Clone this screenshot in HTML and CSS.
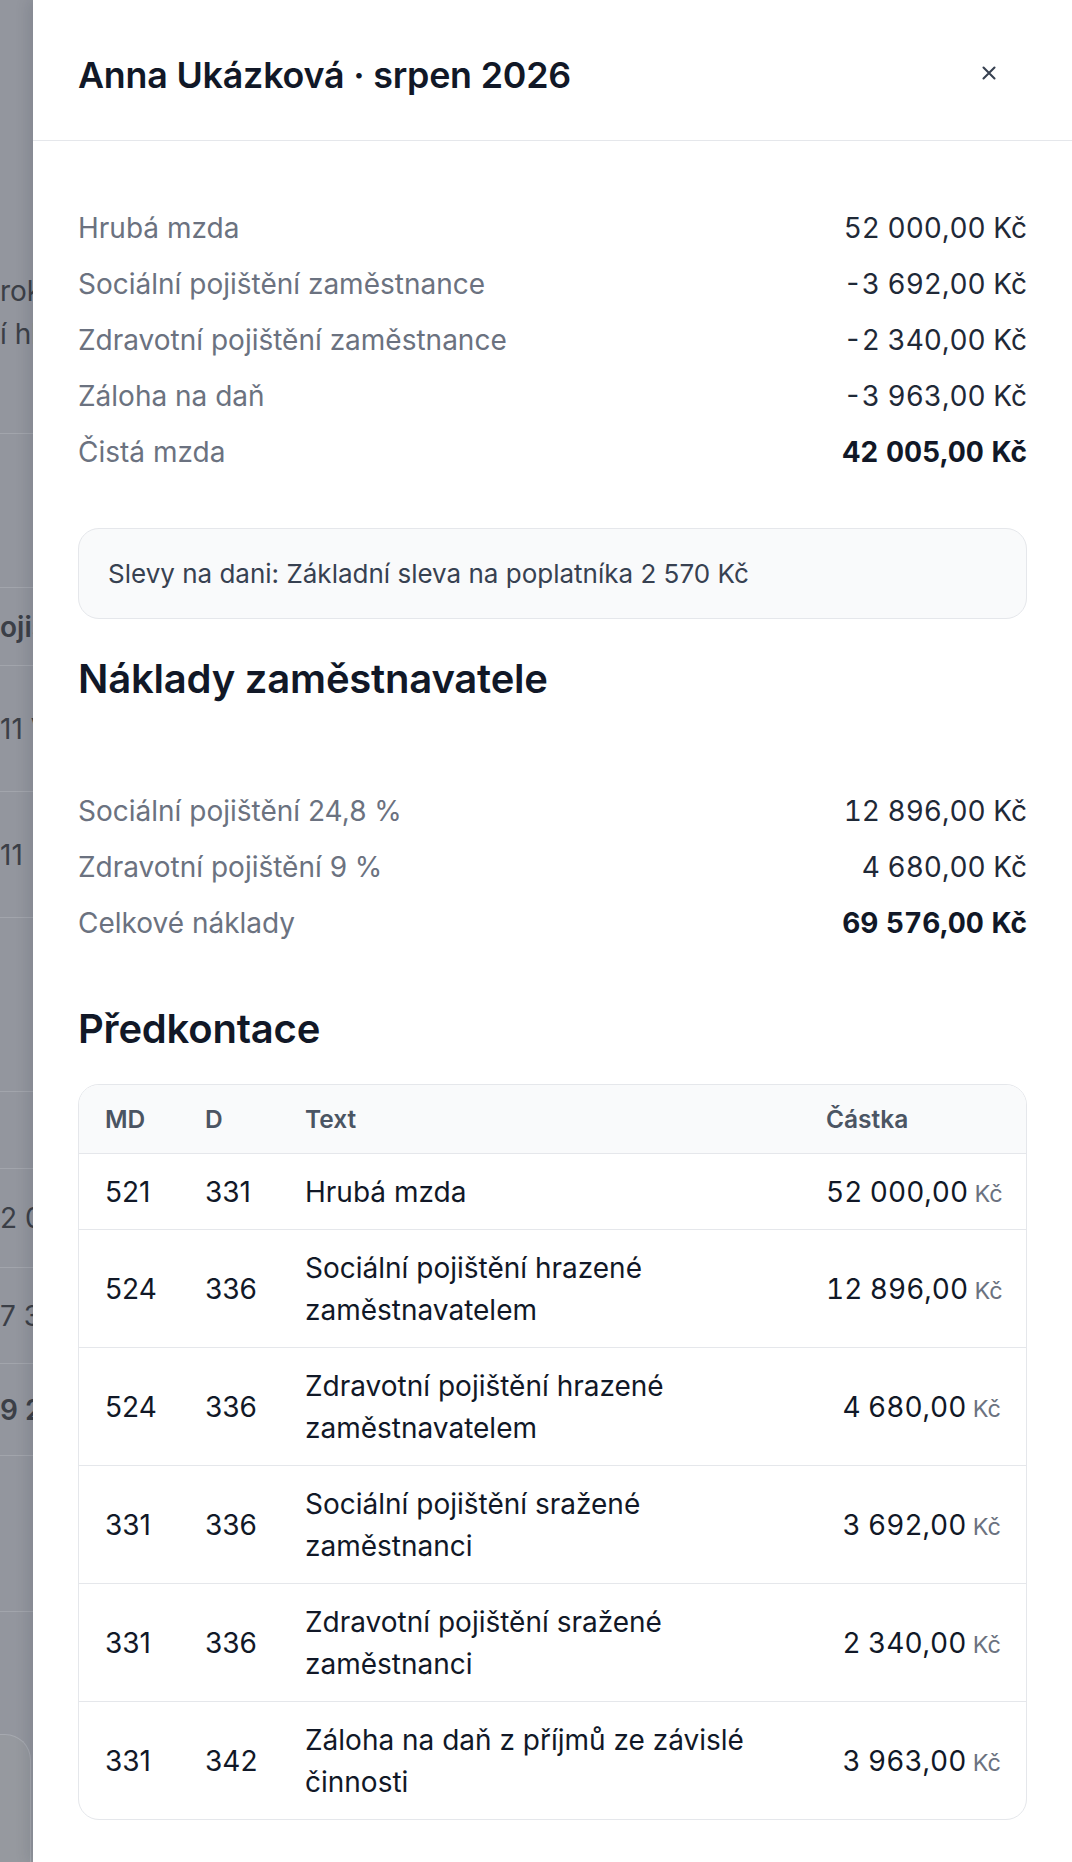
FILE: index.html
```html
<!DOCTYPE html>
<html lang="cs">
<head>
<meta charset="utf-8">
<title>Anna Ukázková · srpen 2026</title>
<link rel="stylesheet" href="styles.css">
</head>
<body>
<div class="screen">
  <div class="backdrop" aria-hidden="true">
    <div class="bd-block bd-top">
      <div class="bd-line">rokem</div>
      <div class="bd-line">í hlavní</div>
    </div>
    <div class="bd-block bd-h153"></div>
    <div class="bd-block bd-h77"><span class="bd-bold">ojištění</span></div>
    <div class="bd-block bd-h125">11 Výplata</div>
    <div class="bd-block bd-h125">11</div>
    <div class="bd-block bd-h173"></div>
    <div class="bd-block bd-h76"></div>
    <div class="bd-block bd-h98">2 000</div>
    <div class="bd-block bd-h95">7 320</div>
    <div class="bd-block bd-h91"><span class="bd-bold">9 210</span></div>
    <div class="bd-block bd-h155"></div>
    <div class="bd-block bd-h123"></div>
    <div class="bd-card"></div>
  </div>

  <aside class="drawer">
    <header class="drawer-head">
      <h2 class="drawer-title">Anna Ukázková · srpen 2026</h2>
      <button class="close-btn" type="button" aria-label="Zavřít">
        <svg width="16" height="16" viewBox="0 0 16 16"><path d="M2.5 2.5 L13.5 13.5 M13.5 2.5 L2.5 13.5" stroke="#374151" stroke-width="2.1" stroke-linecap="round" fill="none"/></svg>
      </button>
    </header>

    <div class="drawer-body">
      <dl class="summary">
        <div class="sum-row"><dt>Hrubá mzda</dt><dd>52 000,00 Kč</dd></div>
        <div class="sum-row"><dt>Sociální pojištění zaměstnance</dt><dd>-3 692,00 Kč</dd></div>
        <div class="sum-row"><dt>Zdravotní pojištění zaměstnance</dt><dd>-2 340,00 Kč</dd></div>
        <div class="sum-row"><dt>Záloha na daň</dt><dd>-3 963,00 Kč</dd></div>
        <div class="sum-row"><dt>Čistá mzda</dt><dd class="strong">42 005,00 Kč</dd></div>
      </dl>

      <div class="note">Slevy na dani: Základní sleva na poplatníka 2 570 Kč</div>

      <h3 class="section-title first">Náklady zaměstnavatele</h3>
      <dl class="summary costs">
        <div class="sum-row"><dt>Sociální pojištění 24,8 %</dt><dd>12 896,00 Kč</dd></div>
        <div class="sum-row"><dt>Zdravotní pojištění 9 %</dt><dd>4 680,00 Kč</dd></div>
        <div class="sum-row"><dt>Celkové náklady</dt><dd class="strong">69 576,00 Kč</dd></div>
      </dl>

      <h3 class="section-title second">Předkontace</h3>
      <table class="ledger">
        <colgroup>
          <col class="c-md"><col class="c-d"><col class="c-text"><col class="c-amt">
        </colgroup>
        <thead>
          <tr><th>MD</th><th>D</th><th>Text</th><th>Částka</th></tr>
        </thead>
        <tbody>
          <tr><td>521</td><td>331</td><td>Hrubá mzda</td><td class="amt">52 000,00<span class="cur"> Kč</span></td></tr>
          <tr><td>524</td><td>336</td><td>Sociální pojištění hrazené zaměstnavatelem</td><td class="amt">12 896,00<span class="cur"> Kč</span></td></tr>
          <tr><td>524</td><td>336</td><td>Zdravotní pojištění hrazené zaměstnavatelem</td><td class="amt">4 680,00<span class="cur"> Kč</span></td></tr>
          <tr><td>331</td><td>336</td><td>Sociální pojištění sražené zaměstnanci</td><td class="amt">3 692,00<span class="cur"> Kč</span></td></tr>
          <tr><td>331</td><td>336</td><td>Zdravotní pojištění sražené zaměstnanci</td><td class="amt">2 340,00<span class="cur"> Kč</span></td></tr>
          <tr><td>331</td><td>342</td><td>Záloha na daň z příjmů ze závislé činnosti</td><td class="amt">3 963,00<span class="cur"> Kč</span></td></tr>
        </tbody>
      </table>
    </div>
  </aside>
</div>
</body>
</html>
```

FILE: styles.css
```css
* { box-sizing: border-box; }

html, body {
  margin: 0;
  padding: 0;
  background: #ffffff;
}

body {
  font-family: Inter, "Noto Sans", "Liberation Sans", sans-serif;
  color: #111827;
}

.screen {
  display: flex;
  width: 1072px;
  height: 1862px;
  overflow: hidden;
}

/* dimmed page behind the drawer */
.backdrop {
  flex: 0 0 33px;
  background: #93969e;
  color: #3b3f47;
  font-size: 28px;
  line-height: 42px;
  overflow: hidden;
  white-space: nowrap;
}

.bd-block {
  display: flex;
  align-items: center;
  border-bottom: 1px solid #a2a5ac;
  overflow: hidden;
}

.bd-top {
  height: 434px;
  flex-direction: column;
  align-items: flex-start;
  justify-content: flex-start;
  padding-top: 270px;
}

.bd-line { line-height: 43px; }

.bd-h153 { height: 154px; }
.bd-h77 { height: 78px; }
.bd-h125 { height: 126px; }
.bd-h173 { height: 174px; }
.bd-h76 { height: 77px; }
.bd-h98 { height: 99px; }
.bd-h95 { height: 96px; }
.bd-h91 { height: 92px; }
.bd-h155 { height: 156px; }
.bd-h123 { height: 122px; border-bottom: 0; }

.bd-bold { font-weight: 600; }

.bd-card {
  height: 200px;
  margin-right: 2px;
  border-top: 1px solid #a6a9b0;
  border-right: 1px solid #a6a9b0;
  border-top-right-radius: 26px;
  background: #96999f;
}

/* drawer */
.drawer {
  flex: 1 1 auto;
  background: #ffffff;
  box-shadow: -4px 0 14px rgba(17, 24, 39, 0.12);
  display: flex;
  flex-direction: column;
}

.drawer-head {
  display: flex;
  align-items: center;
  justify-content: space-between;
  height: 141px;
  padding: 51px 64px 40px 45px;
  border-bottom: 1px solid #e5e7eb;
}

.drawer-title {
  margin: 0;
  font-size: 35.8px;
  line-height: 49px;
  font-weight: 600;
  color: #111827;
  letter-spacing: -0.2px;
}

.close-btn {
  width: 38px;
  height: 38px;
  margin-top: -5px;
  padding: 0;
  border: 0;
  background: transparent;
  display: flex;
  align-items: center;
  justify-content: center;
}

.drawer-body {
  padding: 66px 45px 0 45px;
}

.summary {
  margin: 0;
  display: flex;
  flex-direction: column;
  gap: 14px;
}

.sum-row {
  display: flex;
  justify-content: space-between;
  align-items: center;
  font-size: 28px;
  line-height: 42px;
}

.sum-row dt {
  color: #6b7280;
}

.sum-row dd {
  margin: 0;
  color: #1f2937;
  font-variant-numeric: tabular-nums;
}

.sum-row dd.strong {
  font-weight: 700;
  color: #111827;
}

.note {
  margin-top: 55px;
  padding: 27px 29px;
  background: #f9fafb;
  border: 1px solid #e5e7eb;
  border-radius: 21px;
  font-size: 26px;
  line-height: 35px;
  color: #374151;
}

.section-title {
  margin: 0;
  font-size: 40px;
  line-height: 49px;
  font-weight: 600;
  color: #111827;
  letter-spacing: -0.2px;
}

.section-title.first {
  margin-top: 34.5px;
  margin-bottom: 87.5px;
}

.section-title.second {
  margin-top: 59.5px;
  margin-bottom: 31.5px;
}

.ledger {
  width: 100%;
  table-layout: fixed;
  border-collapse: separate;
  border-spacing: 0;
  border: 1px solid #e5e7eb;
  border-radius: 21px;
  overflow: hidden;
}

.c-md { width: 113px; }
.c-d { width: 100px; }
.c-amt { width: 213px; }

.ledger th,
.ledger td {
  padding: 16.5px 13px;
  text-align: left;
  vertical-align: middle;
  border-bottom: 1px solid #e5e7eb;
}

.ledger th:first-child,
.ledger td:first-child {
  padding-left: 26px;
}

.ledger th:last-child,
.ledger td:last-child {
  padding-right: 25px;
}

.ledger thead th {
  background: #f9fafb;
  font-size: 24.5px;
  line-height: 35px;
  font-weight: 600;
  color: #4b5563;
}

.ledger tbody td {
  font-size: 28px;
  line-height: 42px;
  color: #111827;
}

.ledger tbody tr:last-child td {
  border-bottom: 0;
}

.ledger td.amt {
  text-align: right;
  white-space: nowrap;
  font-variant-numeric: tabular-nums;
}

.cur {
  font-size: 23.5px;
  line-height: 1;
  color: #6b7280;
}
```
